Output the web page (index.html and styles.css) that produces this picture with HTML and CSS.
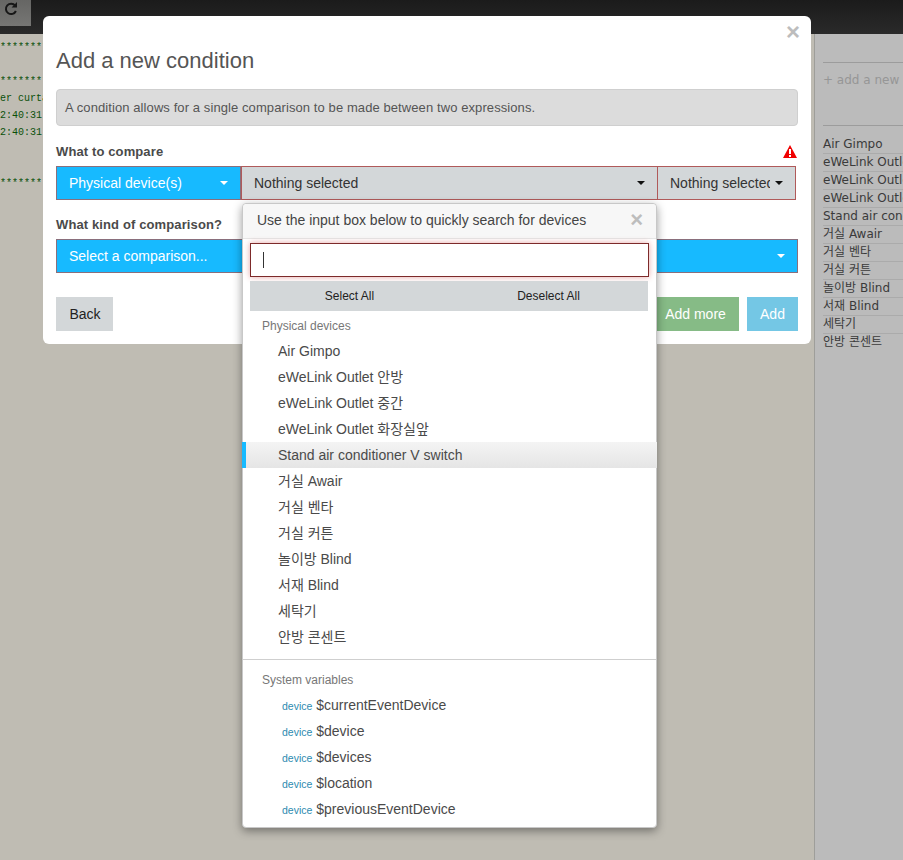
FILE: index.html
```html
<!DOCTYPE html>
<html lang="en">
<head>
<meta charset="utf-8">
<title>Add a new condition</title>
<link rel="stylesheet" href="styles.css">
</head>
<body>
<header class="topbar">
  <div class="refresh">
    <svg width="14" height="15" viewBox="0 0 14 15"><path d="M11.2 4.6A5.2 5.2 0 1 0 11.9 10" fill="none" stroke="#171717" stroke-width="2"/><path d="M13 1v5.4H7.6z" fill="#171717"/></svg>
  </div>
</header>
<div class="main">
  <pre class="console">**********************

**********************
er curtain
2:40:31
2:40:31


**********************</pre>
  <aside class="side">
    <div class="add-new">+ add a new device</div>
    <ul class="side-list">
      <li>Air Gimpo</li>
      <li>eWeLink Outlet</li>
      <li>eWeLink Outlet</li>
      <li>eWeLink Outlet</li>
      <li>Stand air conditioner</li>
      <li>거실 Awair</li>
      <li>거실 벤타</li>
      <li>거실 커튼</li>
      <li>놀이방 Blind</li>
      <li>서재 Blind</li>
      <li>세탁기</li>
      <li>안방 콘센트</li>
    </ul>
  </aside>
</div>

<section class="modal">
  <span class="close modal-close">×</span>
  <h2 class="modal-title">Add a new condition</h2>
  <div class="well">A condition allows for a single comparison to be made between two expressions.</div>
  <div class="label-row">
    <span class="label">What to compare</span>
    <svg class="warn" width="14" height="13" viewBox="0 0 14 13"><path d="M7 0 14 13H0z" fill="#f00000"/><rect x="6" y="4" width="2" height="5" fill="#fff"/><rect x="6" y="10" width="2" height="2" fill="#fff"/></svg>
  </div>
  <div class="select-row">
    <div class="sel sel-blue sel-type"><span class="sel-text">Physical device(s)</span><i class="caret caret-white"></i></div>
    <div class="sel sel-gray sel-device"><span class="sel-text">Nothing selected</span><i class="caret"></i></div>
    <div class="sel sel-gray sel-attr"><span class="sel-text">Nothing selected</span><i class="caret"></i></div>

    <div class="dropdown">
      <div class="dd-head"><span>Use the input box below to quickly search for devices</span><span class="close dd-close">×</span></div>
      <div class="dd-search"><span class="cursor"></span></div>
      <div class="dd-actions"><span>Select All</span><span>Deselect All</span></div>
      <div class="dd-group">Physical devices</div>
      <ul class="dd-list">
        <li>Air Gimpo</li>
        <li>eWeLink Outlet 안방</li>
        <li>eWeLink Outlet 중간</li>
        <li>eWeLink Outlet 화장실앞</li>
        <li class="active">Stand air conditioner V switch</li>
        <li>거실 Awair</li>
        <li>거실 벤타</li>
        <li>거실 커튼</li>
        <li>놀이방 Blind</li>
        <li>서재 Blind</li>
        <li>세탁기</li>
        <li>안방 콘센트</li>
      </ul>
      <div class="dd-divider"></div>
      <div class="dd-group">System variables</div>
      <ul class="dd-list dd-vars">
        <li><small>device</small> $currentEventDevice</li>
        <li><small>device</small> $device</li>
        <li><small>device</small> $devices</li>
        <li><small>device</small> $location</li>
        <li><small>device</small> $previousEventDevice</li>
      </ul>
    </div>
  </div>
  <div class="label-row label-kind"><span class="label">What kind of comparison?</span></div>
  <div class="sel sel-blue sel-full"><span class="sel-text">Select a comparison...</span><i class="caret caret-white"></i></div>
  <div class="footer">
    <button class="btn btn-back">Back</button>
    <div class="footer-right">
      <button class="btn btn-more">Add more</button>
      <button class="btn btn-add">Add</button>
    </div>
  </div>
</section>
</body>
</html>
```

FILE: styles.css
```css
* { box-sizing: border-box; }
html, body { margin: 0; padding: 0; }
body {
  width: 903px;
  height: 860px;
  overflow: hidden;
  position: relative;
  background: #bfbcb3;
  font-family: "Liberation Sans", "Noto Sans CJK KR", sans-serif;
  color: #333;
}
ul { list-style: none; margin: 0; padding: 0; }

.topbar {
  height: 34px;
  background: linear-gradient(#1b1b1b, #2a2a2a);
}
.refresh {
  width: 31px;
  height: 26px;
  background: linear-gradient(#666664, #767674);
  display: flex;
  padding: 1px 0 0 4px;
}

.main { display: flex; height: 826px; }
.console {
  flex: 1;
  margin: 0;
  padding-top: 5px;
  overflow: hidden;
  font-family: "Liberation Mono", monospace;
  font-size: 10px;
  line-height: 17px;
  color: #0a500a;
}
.side {
  width: 89px;
  flex: none;
  border-left: 1px solid #9e9e9a;
  padding: 28px 0 0 8px;
  background: #bbbbbb;
  overflow: hidden;
  font-family: "DejaVu Sans", "Noto Sans CJK KR", sans-serif;
  font-size: 12px;
  white-space: nowrap;
}
.add-new {
  height: 64px;
  border-top: 1px solid #9c9c9c;
  border-bottom: 1px solid #9c9c9c;
  padding-top: 10px;
  color: #969696;
}
.side-list { margin-top: 10px; }
.side-list li {
  height: 18px;
  line-height: 17px;
  border-bottom: 1px solid #ababab;
  color: #3a3a3a;
}
.side-list li:last-child { border-bottom: 0; }

.modal {
  position: absolute;
  left: 43px;
  top: 16px;
  width: 768px;
  height: 328px;
  background: #fff;
  border-radius: 6px;
  padding: 0 13px;
}
.close {
  color: #bdbdbd;
  font-weight: bold;
  font-size: 24px;
  line-height: 1;
}
.modal-close { position: absolute; right: 11px; top: 4px; }
.modal-title {
  margin: 0;
  padding-top: 31px;
  height: 73px;
  font-size: 22px;
  line-height: 27px;
  font-weight: normal;
  color: #555;
}
.well {
  height: 37px;
  background: #dcdcdc;
  border: 1px solid #cfcfcf;
  border-radius: 4px;
  padding: 0 8px;
  line-height: 35px;
  font-size: 13px;
  letter-spacing: .09px;
  color: #555;
}
.label-row {
  display: flex;
  justify-content: space-between;
  align-items: flex-end;
  height: 40px;
  padding-bottom: 6px;
}
.label { font-size: 13px; font-weight: bold; letter-spacing: .12px; color: #4a4a4a; line-height: 16px; }
.warn { margin: 0 1px 2px 0; }
.label-kind { height: 39px; padding-bottom: 6px; }

.select-row { display: flex; position: relative; width: 740px; }
.sel {
  height: 34px;
  display: flex;
  align-items: center;
  justify-content: space-between;
  font-size: 14px;
  border: 1px solid #b05a5a;
  white-space: nowrap;
}
.sel-text { overflow: hidden; }
.sel-blue { background: #17baff; color: #fff; border-color: #8a6f7c; padding: 0 12px; }
.sel-gray { background: #d3d7d9; color: #333; }
.sel-type { width: 185px; }
.sel-device { width: 417px; padding: 0 12px; }
.sel-attr { width: 139px; margin-left: -1px; padding: 0 12px; }
.sel-attr .sel-text { width: 100px; flex: none; }
.sel-full { width: 742px; }
.caret {
  width: 0;
  height: 0;
  flex: none;
  border-left: 4px solid transparent;
  border-right: 4px solid transparent;
  border-top: 4px solid #111;
}
.caret-white { border-top-color: #fff; }

.dropdown {
  position: absolute;
  left: 186px;
  top: 37px;
  width: 415px;
  height: 625px;
  background: #fff;
  border: 1px solid #c8c8c8;
  border-radius: 4px;
  box-shadow: 0 3px 10px rgba(0, 0, 0, .4);
  z-index: 2;
}
.dd-head {
  height: 35px;
  background: #f7f7f7;
  border-bottom: 1px solid #e6e6e6;
  border-radius: 4px 4px 0 0;
  padding: 0 13px 2px 14px;
  display: flex;
  align-items: center;
  justify-content: space-between;
  font-size: 14px;
  color: #444;
}
.dd-close { font-size: 22px; }
.dd-search {
  height: 34px;
  margin: 4px 7px 0;
  width: 399px;
  border: 1px solid #7d2a2a;
  box-shadow: 0 0 6px rgba(200, 60, 60, .45);
  display: flex;
  align-items: center;
  padding-left: 12px;
}
.cursor { width: 1px; height: 16px; background: #333; }
.dd-actions {
  height: 30px;
  margin: 4px 8px 0 7px;
  background: #d3d7d9;
  display: grid;
  grid-template-columns: 1fr 1fr;
  align-items: center;
  text-align: center;
  font-size: 12px;
  color: #222;
}
.dd-group {
  height: 27px;
  padding: 8px 0 0 19px;
  font-size: 12px;
  line-height: 14px;
  color: #777;
}
.dd-list li {
  height: 26px;
  line-height: 26px;
  padding-left: 35px;
  font-size: 14px;
  color: #4a4a4a;
  white-space: nowrap;
}
.dd-list li.active {
  margin: 0 -1px;
  background: linear-gradient(#f4f4f4, #e5e5e5);
  border-left: 4px solid #17baff;
  padding-left: 32px;
}
.dd-divider { height: 1px; background: #cfcfcf; margin-top: 9px; }
.dd-divider + .dd-group { padding-top: 13px; height: 32px; }
.dd-list.dd-vars li { padding-left: 39px; }
.dd-vars small { font-size: 10.5px; color: #2d8bb0; }

.footer {
  display: flex;
  justify-content: space-between;
  margin-top: 24px;
}
.footer-right { display: flex; gap: 8px; }
.btn {
  height: 34px;
  border: 0;
  padding: 0;
  font-family: inherit;
  font-size: 14px;
}
.btn-back { width: 57px; padding-left: 1px; background: #d3d7d9; color: #222; }
.btn-more { width: 87px; background: #86bb86; color: #fff; }
.btn-add { width: 51px; background: #74c7e5; color: #fff; }
```
